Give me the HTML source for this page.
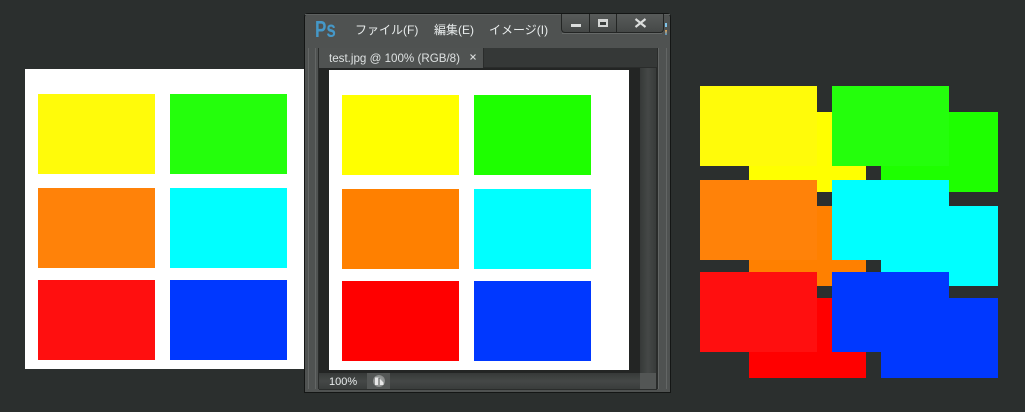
<!DOCTYPE html>
<html lang="ja"><head><meta charset="utf-8"><title>test</title>
<style>
html,body{margin:0;padding:0;background:#2b2f2e;}
#p{position:relative;width:1025px;height:412px;overflow:hidden;background:#2b2f2e;font-family:"Liberation Sans","Noto Sans CJK JP",sans-serif;}
#p div{position:absolute;}
.r{width:117px;height:80px;}
.t{color:#dfe3e3;font-size:11px;line-height:14px;white-space:nowrap;}
</style></head><body><div id="p">
<!-- left image -->
<div style="left:25px;top:69px;width:282px;height:300px;background:#fff"></div>
<div class="r" style="left:38px;top:94px;background:#fffb0a"></div>
<div class="r" style="left:170px;top:94px;background:#24ff0c"></div>
<div class="r" style="left:38px;top:188px;background:#ff8209"></div>
<div class="r" style="left:170px;top:188px;background:#00ffff"></div>
<div class="r" style="left:38px;top:280px;background:#ff0f0f"></div>
<div class="r" style="left:170px;top:280px;background:#0038ff"></div>

<!-- window -->
<div style="left:304px;top:13px;width:367px;height:380px;background:#141615;border-radius:4px 4px 0 0"></div>
<div style="left:305px;top:14px;width:365px;height:378px;background:#4f5251;border-radius:3px 3px 0 0"></div>
<div style="left:305px;top:14px;width:365px;height:1px;background:#5d605f"></div>
<!-- left and right frame lines -->
<div style="left:308px;top:48px;width:1px;height:341px;background:#636665"></div>
<div style="left:315px;top:48px;width:1px;height:341px;background:#636665"></div>
<div style="left:318px;top:48px;width:1px;height:341px;background:#2a2c2b"></div>
<div style="left:657px;top:48px;width:1px;height:341px;background:#2a2c2b"></div>
<div style="left:658px;top:48px;width:1px;height:341px;background:#636665"></div>
<div style="left:666px;top:48px;width:1px;height:341px;background:#636665"></div>
<!-- inner area -->
<div style="left:319px;top:48px;width:338px;height:341px;background:#232524"></div>
<!-- tab bar -->
<div style="left:319px;top:48px;width:338px;height:19px;background:#353837;border-bottom:1px solid #2a2c2b"></div>
<div style="left:319px;top:48px;width:164px;height:20px;background:#505352;border-right:1px solid #2a2c2b"></div>
<div class="t" style="left:329px;top:52px;font-size:11.6px;color:#dde1e1">test.jpg @ 100% (RGB/8)</div>
<svg style="position:absolute;left:470px;top:54px" width="6" height="6" viewBox="0 0 6 6"><path d="M.5 .5L5.5 5.5M5.5 .5L.5 5.5" stroke="#d8dada" stroke-width="1.2"/></svg>
<!-- canvas -->
<div style="left:329px;top:70px;width:300px;height:300px;background:#fff"></div>
<div class="r" style="left:342px;top:95px;background:#ffff00"></div>
<div class="r" style="left:474px;top:95px;background:#1eff00"></div>
<div class="r" style="left:342px;top:189px;background:#ff8000"></div>
<div class="r" style="left:474px;top:189px;background:#00ffff"></div>
<div class="r" style="left:342px;top:281px;background:#ff0000"></div>
<div class="r" style="left:474px;top:281px;background:#0038ff"></div>
<!-- scrollbar -->
<div style="left:640px;top:68px;width:16px;height:305px;background:linear-gradient(90deg,#363938,#454847 50%,#383b3a)"></div>
<div style="left:656px;top:68px;width:1px;height:321px;background:#2a2c2b"></div>
<!-- status bar -->
<div style="left:319px;top:373px;width:321px;height:16px;background:linear-gradient(#363938,#454847 50%,#3a3d3c)"></div>
<div style="left:640px;top:373px;width:16px;height:16px;background:#535655"></div>
<div style="left:319px;top:389px;width:338px;height:1px;background:#2a2c2b"></div>
<div class="t" style="left:329px;top:375px;color:#e6eaea">100%</div>
<div style="left:367px;top:373px;width:23px;height:16px;background:#545756"></div>
<div style="left:373px;top:375px;width:12px;height:12px;border-radius:50%;background:radial-gradient(#b0b2b1,#777a79)"></div>
<svg style="position:absolute;left:375px;top:377px" width="9" height="9" viewBox="0 0 9 9"><path d="M0 0.5H3.5V8H0Z" fill="#e8e8e8"/><path d="M4 1L8.5 5.5V8H4.5Z" fill="#e8e8e8"/><path d="M4 1V8" stroke="#444746" stroke-width="1"/></svg>
<!-- title bar -->
<div style="left:315px;top:17px;color:#4598c8;font-weight:bold;font-size:23px;line-height:24px;transform:scaleX(.74);transform-origin:0 0;font-family:'Liberation Sans',sans-serif">Ps</div>
<div class="t" style="left:355px;top:23px;font-size:12px;color:#e8ecec">ファイル(F)</div>
<div class="t" style="left:434px;top:23px;font-size:12px;color:#e8ecec">編集(E)</div>
<div class="t" style="left:489px;top:23px;font-size:12px;color:#e8ecec">イメージ(I)</div>
<!-- window buttons -->
<div style="left:561px;top:14px;width:101px;height:18px;background:linear-gradient(#585b5a,#454847);border:solid #232524;border-width:0 1px 1px 1px;border-radius:0 0 4px 4px"></div>
<div style="left:562px;top:33px;width:100px;height:1px;background:#666968"></div>
<div style="left:589px;top:14px;width:1px;height:18px;background:#232524"></div>
<div style="left:616px;top:14px;width:1px;height:18px;background:#232524"></div>
<div style="left:571px;top:24px;width:10px;height:3px;background:#dcdedd"></div>
<div style="left:598px;top:19px;width:6px;height:3px;border:2px solid #d4d6d5;border-top-width:3px;background:#3a3d3c"></div>
<svg style="position:absolute;left:634px;top:18px" width="13" height="10" viewBox="0 0 13 10"><path d="M1.5 1L11.5 9M11.5 1L1.5 9" stroke="#dcdedd" stroke-width="2.2"/></svg>
<div style="left:665px;top:23px;width:2px;height:4px;background:#7fc4ea"></div>
<div style="left:665px;top:30px;width:2px;height:5px;background:linear-gradient(#e0a050,#5090c0)"></div>

<!-- right composite: back layer -->
<div class="r" style="left:749px;top:112px;background:#ffff00"></div>
<div class="r" style="left:881px;top:112px;background:#1eff00"></div>
<div class="r" style="left:749px;top:206px;background:#ff8000"></div>
<div class="r" style="left:881px;top:206px;background:#00ffff"></div>
<div class="r" style="left:749px;top:298px;background:#ff0000"></div>
<div class="r" style="left:881px;top:298px;background:#0038ff"></div>
<!-- right composite: front layer -->
<div class="r" style="left:700px;top:86px;background:#fffb0a"></div>
<div class="r" style="left:832px;top:86px;background:#24ff0c"></div>
<div class="r" style="left:700px;top:180px;background:#ff8209"></div>
<div class="r" style="left:832px;top:180px;background:#00ffff"></div>
<div class="r" style="left:700px;top:272px;background:#ff0f0f"></div>
<div class="r" style="left:832px;top:272px;background:#0038ff"></div>
</div></body></html>
